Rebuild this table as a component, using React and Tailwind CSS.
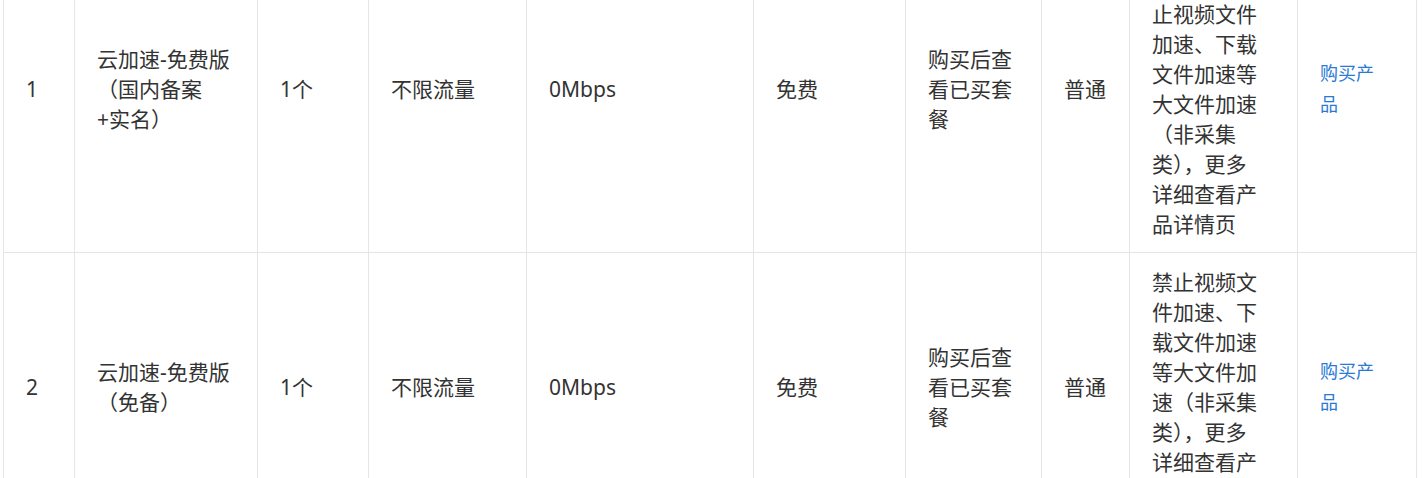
import React from 'react'

// column widths measured from the grid lines (left border included)
const cols = 'grid-cols-[71px_183px_111px_158px_227px_152px_136px_88px_168px_120px]'

const rows = [
  {
    id: '1',
    name: ['云加速-免费版', '（国内备案', '+实名）'],
    domains: '1个',
    traffic: '不限流量',
    bandwidth: '0Mbps',
    price: '免费',
    period: ['购买后查', '看已买套', '餐'],
    level: '普通',
    note: ['仅支持网站', '加速，禁', '止视频文件', '加速、下载', '文件加速等', '大文件加速', '（非采集', '类），更多', '详细查看产', '品详情页'],
  },
  {
    id: '2',
    name: ['云加速-免费版', '（免备）'],
    domains: '1个',
    traffic: '不限流量',
    bandwidth: '0Mbps',
    price: '免费',
    period: ['购买后查', '看已买套', '餐'],
    level: '普通',
    note: ['禁止视频文', '件加速、下', '载文件加速', '等大文件加', '速（非采集', '类），更多', '详细查看产', '品详情页'],
  },
]

function Lines({ items }) {
  return (
    <div className="whitespace-nowrap">
      {items.map((t, i) => (
        <div key={i}>{t}</div>
      ))}
    </div>
  )
}

function Cell({ children, last }) {
  return (
    <div
      className={`flex items-center border-l border-[#e5e5e5] pl-[22px] pr-[10px] pt-[14px] pb-[13px] ${
        last ? 'border-r' : ''
      }`}
    >
      {children}
    </div>
  )
}

export default function App() {
  return (
    <div
      className="w-[1422px] h-[478px] overflow-hidden bg-white text-[#333333] text-[21px] leading-[30px]"
      style={{ fontFamily: '"Noto Sans", "Noto Sans CJK SC", sans-serif' }}
    >
      <div className="ml-[3px] w-[1414px] -mt-[75px]">
        {rows.map((r) => (
          <div key={r.id} className={`grid ${cols} border-b border-[#e5e5e5]`}>
            <Cell>{r.id}</Cell>
            <Cell><Lines items={r.name} /></Cell>
            <Cell>{r.domains}</Cell>
            <Cell>{r.traffic}</Cell>
            <Cell>{r.bandwidth}</Cell>
            <Cell>{r.price}</Cell>
            <Cell><Lines items={r.period} /></Cell>
            <Cell>{r.level}</Cell>
            <Cell><Lines items={r.note} /></Cell>
            <Cell last>
              <a href="#" className="text-[18px] leading-[31.5px] text-[#2a7ad5]">
                购买产<br />品
              </a>
            </Cell>
          </div>
        ))}
      </div>
    </div>
  )
}
